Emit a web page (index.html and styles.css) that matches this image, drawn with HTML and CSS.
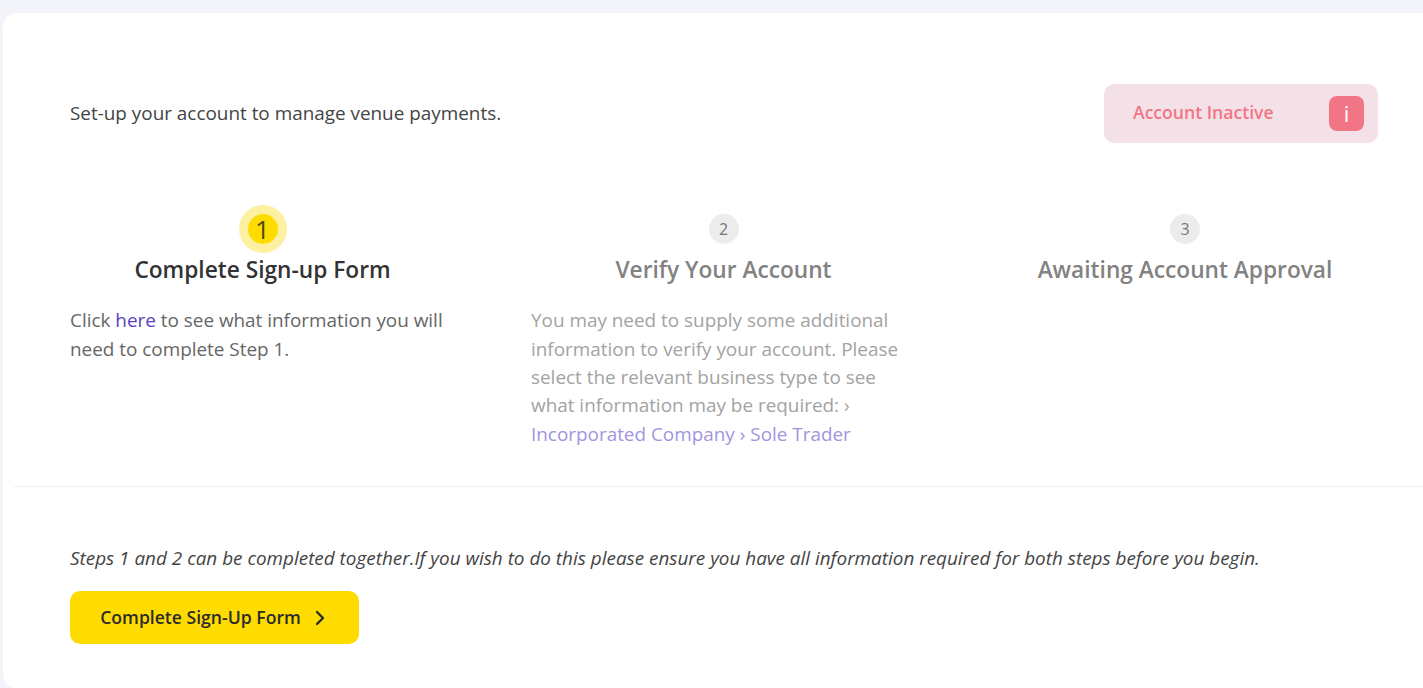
FILE: index.html
```html
<!DOCTYPE html>
<html lang="en">
<head>
<meta charset="utf-8">
<title>Account set-up</title>
<link rel="stylesheet" href="styles.css">
</head>
<body>
<main class="card">
  <header class="top">
    <p class="intro">Set-up your account to manage venue payments.</p>
    <div class="status">
      <span class="status-text">Account Inactive</span>
      <span class="status-icon">i</span>
    </div>
  </header>
  <section class="steps">
    <article class="step step-active">
      <div class="step-head">
        <span class="num num-active">1</span>
        <h2 class="step-title">Complete Sign-up Form</h2>
      </div>
      <p class="step-text">Click <a class="link" href="#">here</a> to see what information you will need to complete Step 1.</p>
    </article>
    <article class="step step-muted">
      <div class="step-head">
        <span class="num">2</span>
        <h2 class="step-title">Verify Your Account</h2>
      </div>
      <p class="step-text">You may need to supply some additional information to verify your account. Please select the relevant business type to see what information may be required: › <a class="link" href="#">Incorporated Company</a> <a class="link" href="#">› Sole Trader</a></p>
    </article>
    <article class="step step-muted">
      <div class="step-head">
        <span class="num">3</span>
        <h2 class="step-title">Awaiting Account Approval</h2>
      </div>
    </article>
  </section>
  <footer class="bottom">
    <p class="note">Steps 1 and 2 can be completed together.If you wish to do this please ensure you have all information required for both steps before you begin.</p>
    <button class="cta" type="button"><span class="cta-label">Complete Sign-Up Form</span>
      <svg class="chev" width="12" height="18" viewBox="0 0 12 18" aria-hidden="true"><path d="M3 3l6 6-6 6" fill="none" stroke="#2b2b2b" stroke-width="2.400" stroke-linecap="round" stroke-linejoin="round"/></svg>
    </button>
  </footer>
</main>
</body>
</html>
```
FILE: styles.css
```css
* { box-sizing: border-box; }
html, body { height: 100%; }
body {
  margin: 0;
  background: #f3f4f9;
  font-family: "Open Sans", sans-serif;
  color: #444;
  overflow: hidden;
}
.card {
  margin: 13px 0 0 3px;
  height: 675px;
  background: #fff;
  border-radius: 14px 0 0 14px;
}
.top {
  display: flex;
  justify-content: space-between;
  align-items: center;
  padding: 71px 45px 0 67px;
}
.intro { margin: -2px 0 0; font-size: 18.9px; color: #444; }
.status {
  width: 274px;
  height: 59px;
  display: flex;
  align-items: center;
  justify-content: space-between;
  padding: 0 14px 0 29px;
  background: #f4e1e8;
  border-radius: 10px;
}
.status-text { margin-top: -3px; font-size: 17.6px; font-weight: 600; color: #f27585; }
.status-icon {
  width: 35px;
  height: 35px;
  display: flex;
  align-items: center;
  justify-content: center;
  padding-bottom: 2px;
  border-radius: 8px;
  background: #f27585;
  color: #fff;
  font-size: 22px;
}
.steps {
  display: grid;
  grid-template-columns: 385px 385px 386px;
  column-gap: 76px;
  padding: 62px 0 0 56px;
  margin-left: 11px;
  height: 344px;
  border-bottom: 1px solid #f0f0f0;
}
.step-head { display: flex; flex-direction: column; align-items: center; }
.num {
  width: 30px;
  height: 30px;
  margin-top: 9px;
  border-radius: 50%;
  display: flex;
  align-items: center;
  justify-content: center;
  background: #ececec;
  color: #777;
  font-size: 16px;
}
.num-active {
  background: #ffdc00;
  color: #4f4a1a;
  font-size: 26px;
  box-shadow: 0 0 0 9px #fdf0a0;
}
.step-title { margin: 12px 0 0; font-size: 22.7px; line-height: 28px; font-weight: 600; color: #333; }
.step-muted .step-title { color: #828282; }
.step-text { margin: 22.2px 0 0; width: 375px; font-size: 18.9px; line-height: 1.5; color: #666; }
.step-muted .step-text { color: #a3a3a3; }
.link { color: #5a3fc0; text-decoration: none; }
.step-muted .link { color: #a195e0; }
.bottom { padding: 58px 0 0 67px; }
.note { margin: 0; font-size: 18.9px; font-style: italic; color: #444; }
.cta {
  margin-top: 20px;
  width: 289px;
  height: 53px;
  display: flex;
  align-items: center;
  justify-content: center;
  gap: 13px;
  padding: 0 3px 0 0;
  border: 0;
  border-radius: 10px;
  background: #ffdc00;
  color: #2b2b2b;
  font: 600 17.6px "Open Sans", sans-serif;
}
.cta-label { margin-top: -2px; }
.chev { display: block; }
```
